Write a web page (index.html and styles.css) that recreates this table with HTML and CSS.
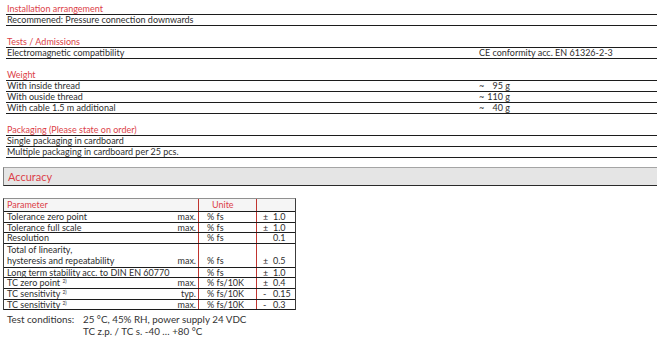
FILE: index.html
```html
<!DOCTYPE html>
<html lang="en">
<head>
<meta charset="utf-8">
<title>Specifications</title>
<link rel="stylesheet" href="styles.css">
</head>
<body>
<div class="page">
  <div class="specs">
    <section class="group">
      <div class="ghead">Installation arrangement</div>
      <div class="grow"><span class="c1">Recommened: Pressure connection downwards</span><span class="c2"></span></div>
    </section>
    <section class="group">
      <div class="ghead">Tests / Admissions</div>
      <div class="grow"><span class="c1">Electromagnetic compatibility</span><span class="c2">CE conformity acc. EN 61326-2-3</span></div>
    </section>
    <section class="group">
      <div class="ghead">Weight</div>
      <div class="grow"><span class="c1">With inside thread</span><span class="c2"><span class="dash">~</span><span class="num">95 g</span></span></div>
      <div class="grow"><span class="c1">With ouside thread</span><span class="c2"><span class="dash">~</span><span class="num">110 g</span></span></div>
      <div class="grow"><span class="c1">With cable 1.5 m additional</span><span class="c2"><span class="dash">~</span><span class="num">40 g</span></span></div>
    </section>
    <section class="group">
      <div class="ghead">Packaging (Please state on order)</div>
      <div class="grow"><span class="c1">Single packaging in cardboard</span><span class="c2"></span></div>
      <div class="grow"><span class="c1">Multiple packaging in cardboard per 25 pcs.</span><span class="c2"></span></div>
    </section>
  </div>

  <div class="accuracy">Accuracy</div>

  <div class="table">
    <div class="row head"><span class="p">Parameter</span><span class="q"></span><span class="u">Unite</span><span class="v"></span></div>
    <div class="row"><span class="p">Tolerance zero point</span><span class="q">max.</span><span class="u">% fs</span><span class="v"><span class="sign">±</span>1.0</span></div>
    <div class="row"><span class="p">Tolerance full scale</span><span class="q">max.</span><span class="u">% fs</span><span class="v"><span class="sign">±</span>1.0</span></div>
    <div class="row"><span class="p">Resolution</span><span class="q"></span><span class="u">% fs</span><span class="v"><span class="sign"></span>0.1</span></div>
    <div class="row tall"><span class="p">Total of linearity,<br>hysteresis and repeatability</span><span class="q"><span>max.</span></span><span class="u"><span>% fs</span></span><span class="v"><span><span class="sign">±</span>0.5</span></span></div>
    <div class="row"><span class="p">Long term stability acc. to DIN EN 60770</span><span class="q"></span><span class="u">% fs</span><span class="v"><span class="sign">±</span>1.0</span></div>
    <div class="row"><span class="p">TC zero point <sup>2)</sup></span><span class="q">max.</span><span class="u">% fs/10K</span><span class="v"><span class="sign">±</span>0.4</span></div>
    <div class="row"><span class="p">TC sensitivity <sup>2)</sup></span><span class="q">typ.</span><span class="u">% fs/10K</span><span class="v"><span class="sign">-</span>0.15</span></div>
    <div class="row"><span class="p">TC sensitivity <sup>2)</sup></span><span class="q">max.</span><span class="u">% fs/10K</span><span class="v"><span class="sign">-</span>0.3</span></div>
  </div>

  <div class="tests">
    <span>Test conditions:</span>
    <span>25 °C, 45% RH, power supply 24 VDC<br>TC z.p. / TC s. -40 … +80 °C</span>
  </div>
</div>
</body>
</html>
```

FILE: styles.css
```css
* { box-sizing: border-box; }

body {
  margin: 0;
  font-family: Lato, "Open Sans", sans-serif;
  font-size: 9px;
  color: #2e2e2e;
  background: #fff;
}

.specs {
  display: flex;
  flex-direction: column;
  gap: 11px;
  padding: 4px 0 0 6px;
}

.ghead {
  height: 11px;
  line-height: 10px;
  border-bottom: 1px solid #1c1c1c;
  color: #dc3f49;
  padding-left: 1px;
}

.grow {
  display: grid;
  grid-template-columns: 473px 1fr;
  height: 11px;
  line-height: 10px;
  border-bottom: 1px solid #1c1c1c;
}

.c1 { padding-left: 1px; }

.dash { display: inline-block; width: 5px; }
.num { display: inline-block; width: 26px; text-align: right; }

.accuracy {
  margin: 9px 0 0 3px;
  height: 19px;
  border-top: 1px solid #a5a5a5;
  border-left: 1px solid #808080;
  border-bottom: 1px solid #2a2a2a;
  background: #e5e5e5;
  color: #dc3f49;
  font-size: 11px;
  line-height: 17px;
  padding-left: 4px;
}

.table {
  margin: 12px 0 0 3px;
  width: 293px;
  border: 1px solid #3c3c3c;
  border-top-color: #909090;
  border-bottom: 0;
}

.row {
  display: grid;
  grid-template-columns: 160px 34px 58px 39px;
  height: 10.6px;
  line-height: 9.6px;
  border-bottom: 1px solid #1c1c1c;
  white-space: nowrap;
}

.row.head {
  height: 13px;
  line-height: 12px;
  background: #f5f5f5;
  color: #dc3f49;
}

.row.tall {
  height: 24px;
  line-height: 11.5px;
}

.tall .q, .tall .u, .tall .v {
  display: flex;
  align-items: flex-end;
}
.tall .q { justify-content: flex-end; }

.p { padding-left: 3px; }
.q { text-align: right; padding-right: 2px; }
.u { border-left: 1px solid #c0342f; padding-left: 8px; }
.v { border-left: 1px solid #c0342f; padding-left: 6px; }
.head .u { padding-left: 13px; }

.sign { display: inline-block; width: 10px; }

sup {
  font-size: 5px;
  line-height: 0;
  vertical-align: 3px;
}

.tests {
  display: grid;
  grid-template-columns: 76px auto;
  padding-left: 7px;
  margin-top: 3px;
  font-size: 9.8px;
  line-height: 12px;
  color: #333;
}
```
